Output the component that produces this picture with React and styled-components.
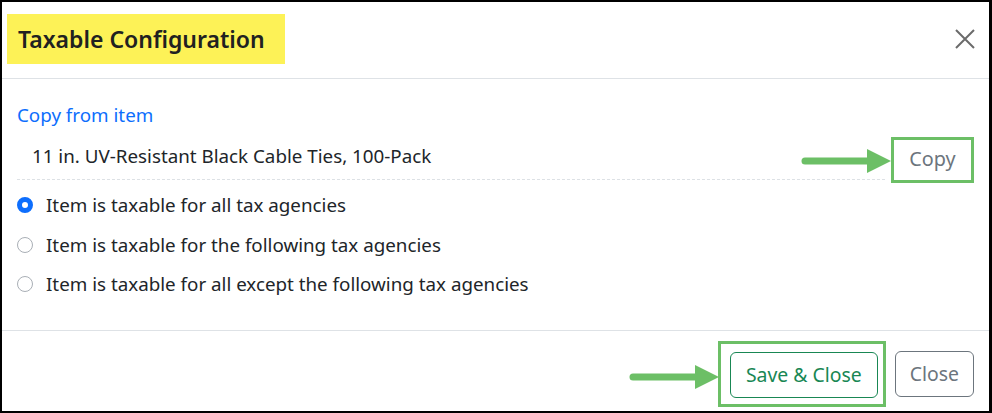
import React from 'react';
import styled, { createGlobalStyle } from 'styled-components';

const GlobalStyle = createGlobalStyle`
  html, body {
    margin: 0;
    padding: 0;
    background: #fff;
  }
  body {
    font-family: "Noto Sans", "Open Sans", Arial, sans-serif;
    color: #212529;
  }
`;

const Frame = styled.div`
  width: 992px;
  height: 413px;
  box-sizing: border-box;
  border-style: solid;
  border-color: #000;
  border-width: 2px 3px 2px 2px;
  display: flex;
  flex-direction: column;
  background: #fff;
`;

const Header = styled.div`
  height: 77px;
  box-sizing: border-box;
  border-bottom: 1px solid #dee2e6;
  display: flex;
  align-items: center;
  justify-content: space-between;
  padding: 0 14px 2px 5px;
`;

const Title = styled.h2`
  margin: 0;
  height: 50px;
  line-height: 50px;
  padding: 0 20px 0 11px;
  background: #fdf257;
  font-size: 23px;
  font-weight: 600;
  color: #212121;
`;

const CloseIcon = styled.button`
  border: 0;
  background: none;
  padding: 0;
  width: 20px;
  height: 20px;
  display: flex;
  color: #6b6b6b;
`;

const Body = styled.div`
  flex: 1;
  padding: 24px 15px 0 15px;
`;

const CopyLabel = styled.div`
  color: #0d6efd;
  font-size: 18.8px;
  line-height: 24px;
`;

const ItemRow = styled.div`
  margin-top: 8px;
  display: flex;
  align-items: flex-start;
  gap: 6px;
`;

const ItemField = styled.div`
  flex: 1;
  height: 45px;
  box-sizing: border-box;
  border-bottom: 1px dashed #dde1e5;
  padding: 0 0 2px 15px;
  display: flex;
  align-items: center;
  font-size: 18.8px;
`;

const Highlight = styled.div`
  position: relative;
  border: 3px solid #6cbf66;
  box-sizing: border-box;
  display: flex;
  align-items: center;
  justify-content: center;
`;

const CopyBox = styled(Highlight)`
  margin-top: 2px;
  width: 83px;
  height: 46px;
`;

const SaveBox = styled(Highlight)`
  padding: 8px 5px 6px 9px;
`;

const Arrow = styled.svg`
  position: absolute;
  right: calc(100% + ${(p) => p.$gap}px);
  top: calc(50% - 12px + ${(p) => p.$shift}px);
  width: 90px;
  height: 24px;
`;

const PlainButton = styled.button`
  border: 0;
  background: #fff;
  font-family: inherit;
  font-size: 19.8px;
  color: #6c757d;
  padding: 0 0 3px;
`;

const RadioList = styled.div`
  margin-top: 10px;
  display: flex;
  flex-direction: column;
  gap: 15.5px;
`;

const RadioRow = styled.label`
  display: flex;
  align-items: center;
  gap: 13px;
  height: 24px;
  line-height: 24px;
  font-size: 18.8px;
`;

const RadioDot = styled.span`
  width: 16px;
  height: 16px;
  box-sizing: border-box;
  border-radius: 50%;
  flex-shrink: 0;
  border: ${(p) => (p.$checked ? '5px solid #0d6efd' : '1px solid #a9afb6')};
  background: #fff;
`;

const Footer = styled.div`
  height: 81px;
  box-sizing: border-box;
  border-top: 1px solid #dee2e6;
  display: flex;
  justify-content: flex-end;
  align-items: center;
  gap: 9px;
  padding: 5px 15px 0 0;
`;

const OutlineButton = styled.button`
  height: 46px;
  box-sizing: border-box;
  padding: 0 ${(p) => p.$pad}px;
  border-radius: 6px;
  border: 1px solid ${(p) => p.$color};
  color: ${(p) => p.$color};
  background: #fff;
  font-family: inherit;
  font-size: 19.4px;
`;

function GreenArrow({ gap, shift }) {
  return (
    <Arrow $gap={gap} $shift={shift} viewBox="0 0 90 24">
      <line x1="4" y1="12" x2="68" y2="12" stroke="#6cbf66" strokeWidth="7" strokeLinecap="round" />
      <polygon points="66,0 90,12 66,24" fill="#6cbf66" />
    </Arrow>
  );
}

const options = [
  'Item is taxable for all tax agencies',
  'Item is taxable for the following tax agencies',
  'Item is taxable for all except the following tax agencies',
];

export default function App() {
  return (
    <>
      <GlobalStyle />
      <Frame>
        <Header>
          <Title>Taxable Configuration</Title>
          <CloseIcon aria-label="Close">
            <svg width="20" height="20" viewBox="0 0 20 20">
              <path d="M1 1 L19 19 M19 1 L1 19" stroke="currentColor" strokeWidth="2" />
            </svg>
          </CloseIcon>
        </Header>
        <Body>
          <CopyLabel>Copy from item</CopyLabel>
          <ItemRow>
            <ItemField>11 in. UV-Resistant Black Cable Ties, 100-Pack</ItemField>
            <CopyBox>
              <GreenArrow gap={3} shift={1} />
              <PlainButton>Copy</PlainButton>
            </CopyBox>
          </ItemRow>
          <RadioList>
            {options.map((label, i) => (
              <RadioRow key={label}>
                <RadioDot $checked={i === 0} />
                {label}
              </RadioRow>
            ))}
          </RadioList>
        </Body>
        <Footer>
          <SaveBox>
            <GreenArrow gap={2} shift={3} />
            <OutlineButton $color="#198754" $pad={15}>Save &amp; Close</OutlineButton>
          </SaveBox>
          <OutlineButton $color="#6c757d" $pad={14}>Close</OutlineButton>
        </Footer>
      </Frame>
    </>
  );
}
